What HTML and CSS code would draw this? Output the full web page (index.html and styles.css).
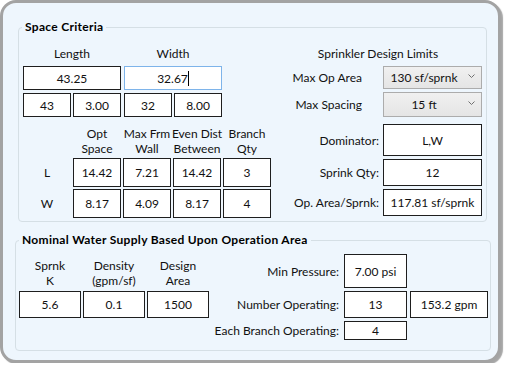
FILE: index.html
```html
<!DOCTYPE html>
<html lang="en">
<head>
  <meta charset="UTF-8">
  <meta name="viewport" content="width=device-width, initial-scale=1.0">
  <title>Sprinkler Layout</title>
  <link rel="stylesheet" href="styles.css">
</head>
<body>
  <div class="frame">
    <fieldset class="group space">
      <legend>Space Criteria</legend>
      <div class="space-body">
        <div class="space-left">
          <div class="dims">
            <div class="dim">
              <div class="dim-head">Length</div>
              <div class="box">43.25</div>
              <div class="pair">
                <div class="box">43</div>
                <div class="box">3.00</div>
              </div>
            </div>
            <div class="dim">
              <div class="dim-head">Width</div>
              <div class="box focused">32.67<span class="caret"></span></div>
              <div class="pair">
                <div class="box">32</div>
                <div class="box">8.00</div>
              </div>
            </div>
          </div>

          <div class="spacing">
            <div></div>
            <div class="col-head"><span>Opt</span><span>Space</span></div>
            <div class="col-head"><span>Max Frm</span><span>Wall</span></div>
            <div class="col-head"><span>Even Dist</span><span>Between</span></div>
            <div class="col-head"><span>Branch</span><span>Qty</span></div>

            <div class="row-label">L</div>
            <div class="box">14.42</div>
            <div class="box">7.21</div>
            <div class="box">14.42</div>
            <div class="box">3</div>

            <div class="row-label">W</div>
            <div class="box">8.17</div>
            <div class="box">4.09</div>
            <div class="box">8.17</div>
            <div class="box">4</div>
          </div>
        </div>

        <div class="limits">
          <div class="limits-title">Sprinkler Design Limits</div>
          <div class="limit-row">
            <div class="label inset">Max Op Area</div>
            <div class="combo">
              <span class="combo-text">130 sf/sprnk</span>
              <svg class="chevron" width="7" height="4" viewBox="0 0 7 4"><path d="M0.5 0.5 L3.5 3.5 L6.5 0.5" fill="none" stroke="#707070" stroke-width="1"/></svg>
            </div>
          </div>
          <div class="limit-row">
            <div class="label inset">Max Spacing</div>
            <div class="combo second">
              <span class="combo-text">15 ft</span>
              <svg class="chevron" width="7" height="4" viewBox="0 0 7 4"><path d="M0.5 0.5 L3.5 3.5 L6.5 0.5" fill="none" stroke="#707070" stroke-width="1"/></svg>
            </div>
          </div>
          <div class="limit-row first-result">
            <div class="label">Dominator:</div>
            <div class="box result dominator">L,W</div>
          </div>
          <div class="limit-row">
            <div class="label">Sprink Qty:</div>
            <div class="box result">12</div>
          </div>
          <div class="limit-row">
            <div class="label">Op. Area/Sprnk:</div>
            <div class="box result">117.81 sf/sprnk</div>
          </div>
        </div>
      </div>
    </fieldset>

    <fieldset class="group supply">
      <legend>Nominal Water Supply Based Upon Operation Area</legend>
      <div class="supply-body">
        <div class="supply-left">
          <div class="col-head"><span>Sprnk</span><span>K</span></div>
          <div class="col-head"><span>Density</span><span>(gpm/sf)</span></div>
          <div class="col-head"><span>Design</span><span>Area</span></div>
          <div class="box">5.6</div>
          <div class="box">0.1</div>
          <div class="box">1500</div>
        </div>

        <div class="supply-right">
          <div class="label">Min Pressure:</div>
          <div class="box">7.00 psi</div>
          <div></div>

          <div class="label">Number Operating:</div>
          <div class="box">13</div>
          <div class="box">153.2 gpm</div>

          <div class="label">Each Branch Operating:</div>
          <div class="box">4</div>
          <div></div>
        </div>
      </div>
    </fieldset>
  </div>
</body>
</html>
```

FILE: styles.css
```css
body {
  margin: 0;
  background-color: #fff;
  font-family: Lato, "Liberation Sans", sans-serif;
  font-size: 12px;
  color: #111;
}
.frame {
  width: 501px;
  height: 363px;
  box-sizing: border-box;
  border: 3px solid #a3a3a3;
  border-radius: 16px;
  background-color: #eef6fd;
  box-shadow: 2px 2px 1px rgba(0,0,0,0.35);
  padding: 16px 0 0 15px;
}
.group {
  margin: 0;
  padding: 0;
  border: 1px solid #d5dfe5;
  border-radius: 4px;
  box-sizing: border-box;
}
.group legend {
  margin-left: 3px;
  padding: 0 3px;
  font-weight: bold;
  line-height: 16px;
  letter-spacing: 0.3px;
  color: #000;
}
.space {
  width: 469px;
  height: 203px;
}
.space-body {
  display: flex;
  justify-content: space-between;
  padding: 0 4px;
}
.space-left {
  margin-top: 10px;
}
.dims {
  display: flex;
  gap: 3px;
}
.dim {
  width: 98px;
  display: flex;
  flex-direction: column;
  gap: 3px;
}
.dim-head {
  height: 18px;
  line-height: 18px;
  text-align: center;
}
.box {
  box-sizing: border-box;
  height: 24px;
  border: 1px solid #1e1e1e;
  background-color: #fff;
  display: flex;
  align-items: center;
  justify-content: center;
  white-space: nowrap;
}
.box.focused {
  border-color: #7eb4ea;
}
.caret {
  display: inline-block;
  width: 1px;
  height: 15px;
  background-color: #000;
}
.pair {
  display: flex;
  gap: 2px;
}
.pair .box {
  flex: 1;
}
.spacing {
  display: grid;
  grid-template-columns: repeat(5, 48px);
  grid-template-rows: 30px 29px 29px;
  gap: 2px;
  margin-top: 9px;
}
.spacing .box {
  height: auto;
}
.col-head {
  display: flex;
  flex-direction: column;
  align-items: center;
  justify-content: flex-end;
  line-height: 15px;
  white-space: nowrap;
}
.row-label {
  display: flex;
  align-items: center;
  justify-content: center;
}
.limits {
  width: 208px;
  margin-top: 10px;
  display: flex;
  flex-direction: column;
  gap: 3px;
}
.limits-title {
  height: 18px;
  line-height: 18px;
  text-align: center;
}
.limit-row {
  display: flex;
  align-items: center;
  gap: 4px;
}
.limit-row .label {
  width: 105px;
  flex: none;
  box-sizing: border-box;
  display: flex;
  justify-content: flex-end;
  white-space: nowrap;
}
.limit-row .label.inset {
  padding-right: 17px;
}
.combo {
  width: 99px;
  height: 23px;
  box-sizing: border-box;
  border: 1px solid #acacac;
  background: linear-gradient(#f0f0f0, #e5e5e5);
  display: flex;
  align-items: center;
}
.combo.second {
  height: 25px;
}
.combo-text {
  flex: 1;
  text-align: center;
}
.chevron {
  margin: 0 6px 4px 4px;
}
.first-result {
  margin-top: 4px;
}
.result {
  width: 99px;
  height: 27px;
}
.result.dominator {
  height: 32px;
}
.supply {
  width: 476px;
  height: 119px;
  margin: 10px 0 0 -3px;
}
.supply-body {
  display: flex;
  padding: 0 2px 0 3px;
}
.supply-left {
  margin-top: 10px;
  display: grid;
  grid-template-columns: repeat(3, 62px);
  grid-template-rows: 30px 27px;
  column-gap: 2px;
  row-gap: 3px;
}
.supply-left .box {
  height: auto;
}
.supply-right {
  margin: 6px 0 0 auto;
  display: grid;
  grid-template-columns: auto 63px 78px;
  grid-template-rows: 34px 27px 19px;
  gap: 3px;
}
.supply-right .box {
  height: auto;
}
.supply-right .label {
  display: flex;
  align-items: center;
  justify-content: flex-end;
  padding-right: 2px;
  white-space: nowrap;
}
```
